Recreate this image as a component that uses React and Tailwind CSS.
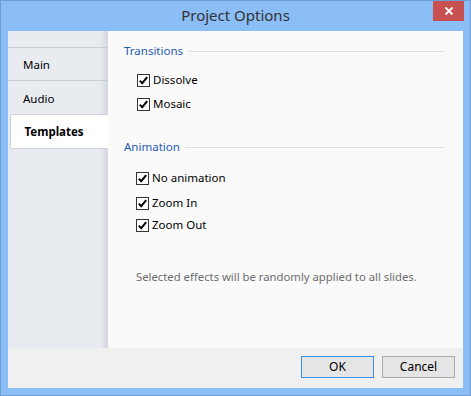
import React from "react";

const font = { fontFamily: '"Segoe UI", "Noto Sans", "Open Sans", sans-serif' };

function Check({ label, className = "" }) {
  return (
    <div className={"flex items-center h-[22px] " + className}>
      <div className="w-[13px] h-[13px] border border-[#333333] bg-white flex items-center justify-center">
        <svg width="11" height="11" viewBox="0 0 11 11">
          <path d="M1.8 5.6 L4.2 8.2 L9.2 2.2" fill="none" stroke="#000" strokeWidth="2" />
        </svg>
      </div>
      <span className="ml-[3px] text-[11.5px] text-black leading-none">{label}</span>
    </div>
  );
}

function Group({ title }) {
  return (
    <div className="flex items-center h-[14px]">
      <span className="text-[11.5px] text-[#1e5bb5] leading-none">{title}</span>
      <div className="flex-1 h-px bg-[#d5dfe5] ml-[5px] mr-[19px]" />
    </div>
  );
}

export default function App() {
  return (
    <div
      className="w-[471px] h-[396px] border border-[#6f9dd6] bg-[#8bbdf6] flex flex-col"
      style={font}
    >
      <div className="h-[30px] relative flex items-center justify-center">
        <span className="text-[15px] text-[#333333] leading-none -mt-[2px]">Project Options</span>
        <div className="absolute right-[6px] top-0 w-[31px] h-[20px] bg-[#c75050] flex items-center justify-center">
          <svg width="10" height="10" viewBox="0 0 10 10">
            <path d="M1.5 1.5 L8.5 8.5 M8.5 1.5 L1.5 8.5" stroke="#fff" strokeWidth="1.8" />
          </svg>
        </div>
      </div>
      <div className="mx-[7px] mb-[7px] flex-1 flex flex-col">
        <div className="flex-1 flex">
          <div className="w-[100px] bg-[#e8ebf0] relative flex flex-col">
            <div className="absolute right-0 top-0 bottom-0 w-[8px] bg-gradient-to-r from-[#e8ebf0] to-[#d3d7de]" />
            <div className="h-[17px] border-b border-[#c8ccd3] relative" />
            <div className="h-[33px] border-b border-[#c8ccd3] flex items-center pt-[2px] pl-[15px] text-[11.5px] text-black relative">Main</div>
            <div className="h-[33px] flex items-center pt-[3px] pl-[15px] text-[11.5px] text-black relative">Audio</div>
            <div className="h-[35px] ml-[1.5px] bg-white border border-r-0 border-[#d0d4da] rounded-l-[2px] flex items-center pt-[1px] pl-[14px] text-[11.5px] font-bold text-black relative">
              Templates
            </div>
          </div>
          <div className="flex-1 bg-[#fafafa] pl-[16px] pt-[13px] flex flex-col">
            <Group title="Transitions" />
            <div className="pl-[13px] mt-[11px] flex flex-col gap-[2px]">
              <Check label="Dissolve" />
              <Check label="Mosaic" />
            </div>
            <div className="mt-[25px]">
              <Group title="Animation" />
            </div>
            <div className="pl-[12px] mt-[13px] flex flex-col">
              <Check label="No animation" />
              <Check label="Zoom In" className="mt-[3px]" />
              <Check label="Zoom Out" />
            </div>
            <div className="pl-[12px] mt-[35px] text-[11.3px] text-[#6d6d6d] leading-none">
              Selected effects will be randomly applied to all slides.
            </div>
          </div>
        </div>
        <div className="h-[40px] bg-[#f0f0f0] flex items-start justify-end pt-[8px] pr-[8px] gap-[8px]">
          <button className="w-[73px] h-[22px] border border-[#3c8ee8] bg-[#e5e5e5] text-[12px] text-black flex items-center justify-center">OK</button>
          <button className="w-[73px] h-[22px] border border-[#acacac] bg-[#e5e5e5] text-[12px] text-black flex items-center justify-center">Cancel</button>
        </div>
      </div>
    </div>
  );
}
